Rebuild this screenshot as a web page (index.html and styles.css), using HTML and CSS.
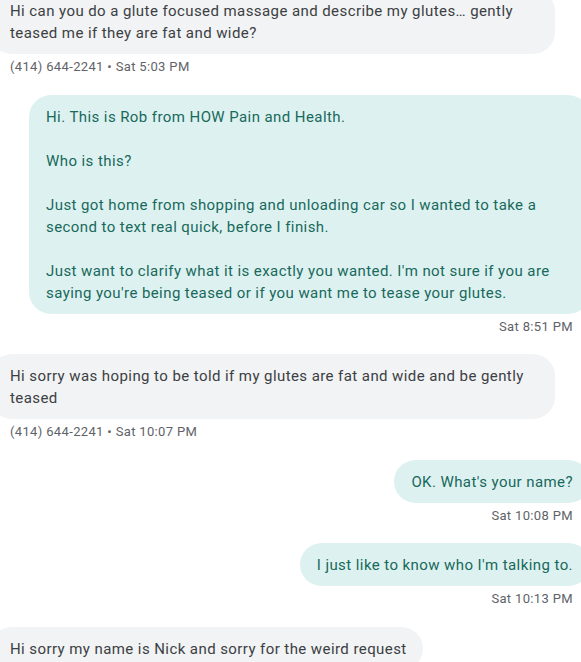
FILE: index.html
```html
<!DOCTYPE html>
<html lang="en">
<head>
<meta charset="utf-8">
<title>Messages</title>
<link rel="stylesheet" href="styles.css">
</head>
<body>
<main class="thread">
  <div class="group in">
    <div class="bubble">Hi can you do a glute focused massage and describe my glutes… gently teased me if they are fat and wide?</div>
    <div class="meta">(414) 644-2241 • Sat 5:03 PM</div>
  </div>
  <div class="group out">
    <div class="bubble">Hi. This is Rob from HOW Pain and Health.<br><br>Who is this?<br><br>Just got home from shopping and unloading car so I wanted to take a second to text real quick, before I finish.<br><br>Just want to clarify what it is exactly you wanted. I'm not sure if you are saying you're being teased or if you want me to tease your glutes.</div>
    <div class="meta">Sat 8:51 PM</div>
  </div>
  <div class="group in">
    <div class="bubble">Hi sorry was hoping to be told if my glutes are fat and wide and be gently teased</div>
    <div class="meta">(414) 644-2241 • Sat 10:07 PM</div>
  </div>
  <div class="group out">
    <div class="bubble">OK. What's your name?</div>
    <div class="meta">Sat 10:08 PM</div>
  </div>
  <div class="group out">
    <div class="bubble">I just like to know who I'm talking to.</div>
    <div class="meta">Sat 10:13 PM</div>
  </div>
  <div class="group in">
    <div class="bubble">Hi sorry my name is Nick and sorry for the weird request</div>
  </div>
</main>
</body>
</html>
```

FILE: styles.css
```css
html, body {
  margin: 0;
  padding: 0;
  background: #ffffff;
  overflow: hidden;
}

body {
  font-family: Roboto, "Noto Sans", Arial, sans-serif;
  width: 581px;
  height: 662px;
}

.thread {
  display: flex;
  flex-direction: column;
  padding: 0 8px 0 10px;
  margin-top: -11px;
}

.group {
  display: flex;
  flex-direction: column;
}

.group.in {
  align-items: flex-start;
}

.group.out {
  align-items: flex-end;
}

.bubble {
  box-sizing: border-box;
  font-size: 15px;
  line-height: 22px;
  letter-spacing: 0.42px;
  padding: 11px 16px 10px 20px;
  border-radius: 22px;
}

.in .bubble {
  background: #f1f3f4;
  color: #3c4043;
  margin-left: -20px;
  max-width: 565px;
}

.out .bubble {
  background: #def1f1;
  color: #17695b;
  padding-left: 17px;
  padding-right: 17px;
  margin-right: -17px;
  max-width: 561px;
}

.meta {
  font-size: 13px;
  line-height: 16px;
  letter-spacing: 0.35px;
  color: #5f6368;
  margin-top: 5px;
  margin-bottom: 19.5px;
}
```
